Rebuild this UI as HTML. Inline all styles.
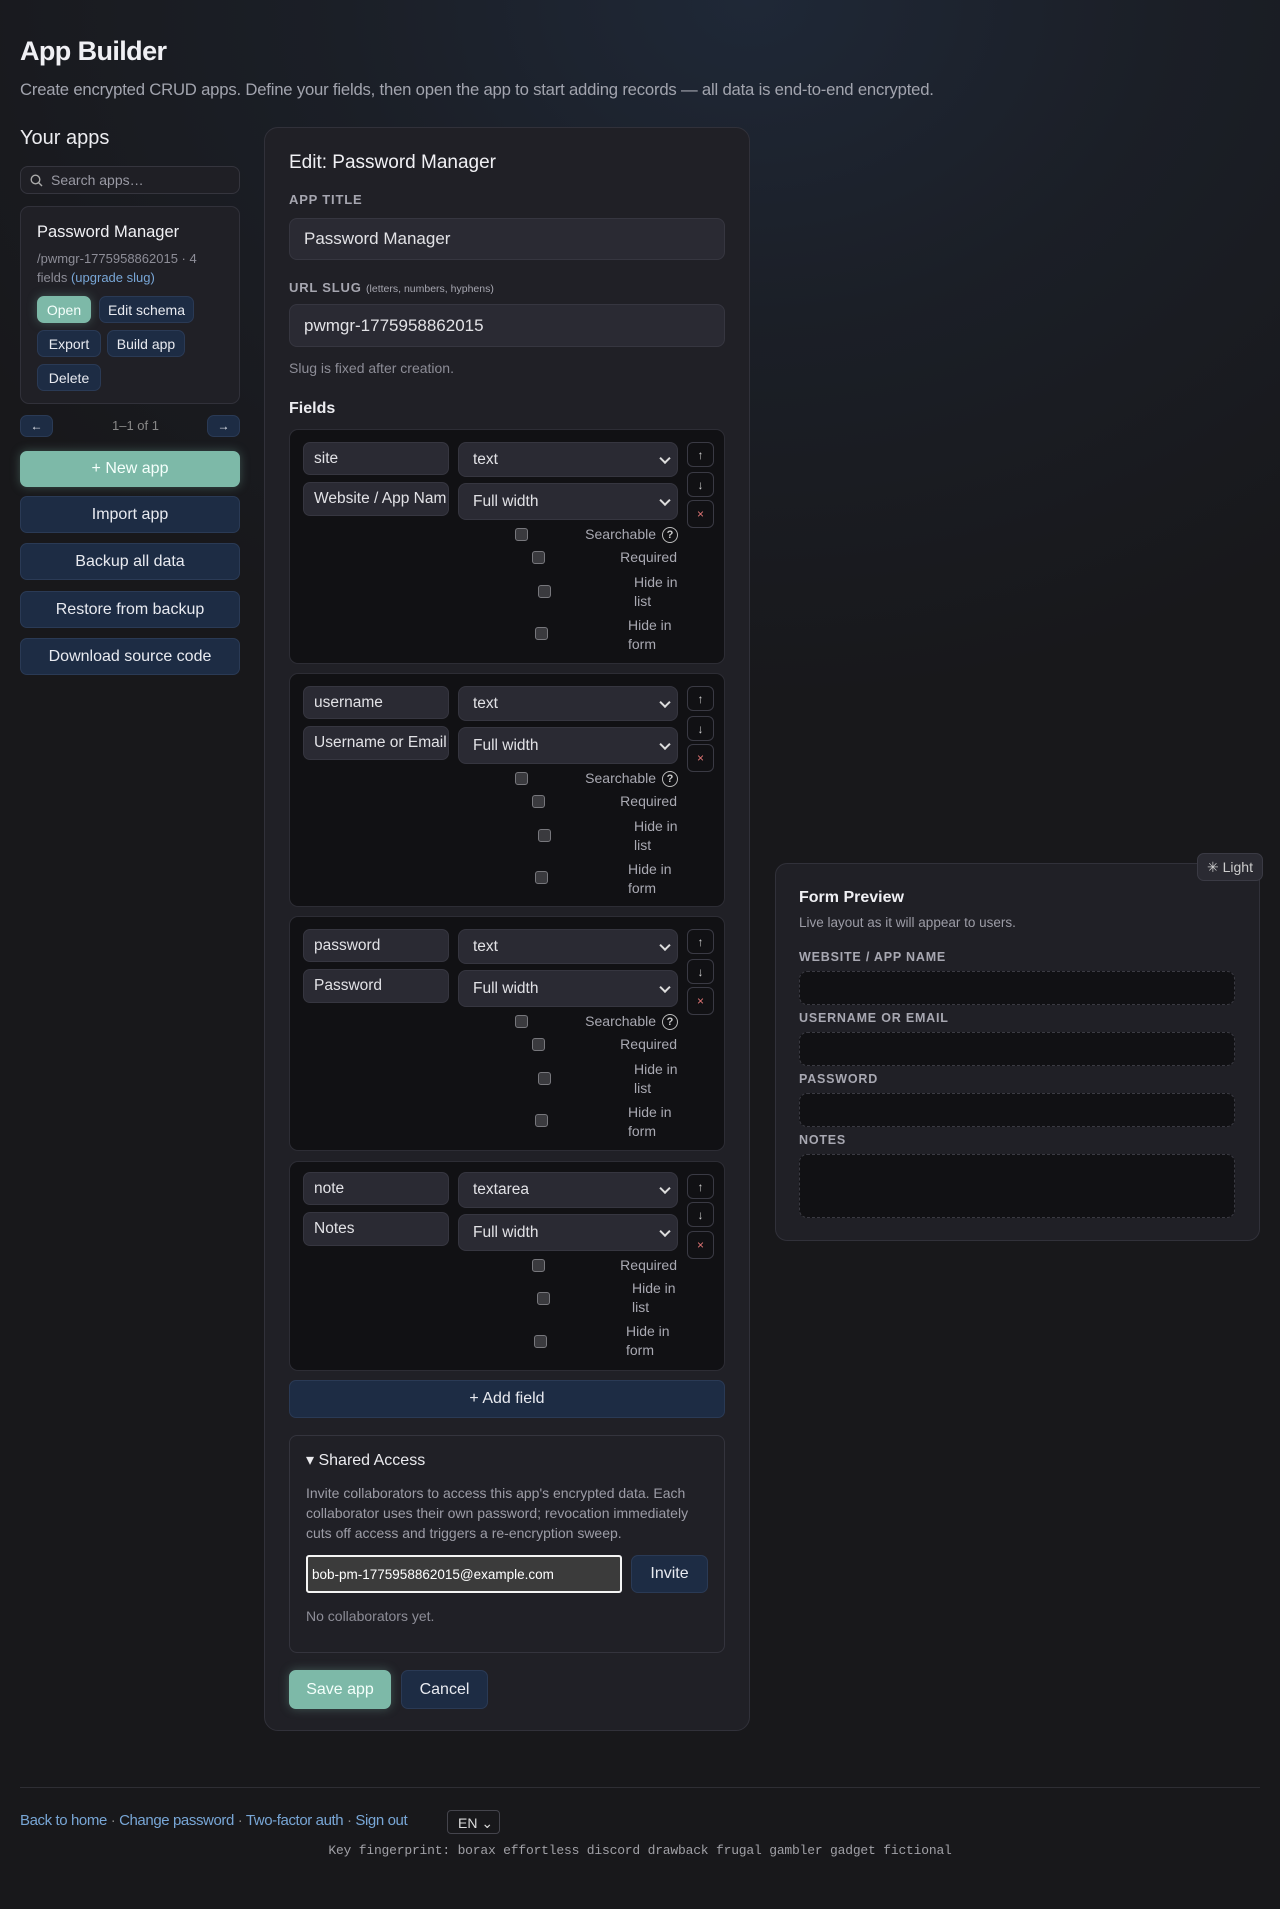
<!DOCTYPE html>
<html><head><meta charset="utf-8"><style>
*{box-sizing:border-box;margin:0;padding:0}
html,body{width:1280px;height:1909px;overflow:hidden}
body{background:#18181b;font-family:"Liberation Sans",sans-serif;color:#e6e6ea;position:relative}
.bg{position:absolute;left:0;top:0;width:1280px;height:1000px;background:radial-gradient(ellipse 900px 700px at 750px 0px,#1f2837 0%,#1b1f27 45%,rgba(24,24,27,0) 100%)}
.a{position:absolute}
.panel{background:#202026;border:1px solid #31313a;border-radius:12px}
.inp{background:#2a2a33;border:1px solid #363640;border-radius:8px;color:#e2e2e6;font-size:16px;display:flex;align-items:center;padding-left:14px}
.btn{background:#1d2c44;border:1px solid #2a3a55;border-radius:7px;color:#e8eaf0;display:flex;align-items:center;justify-content:center;font-size:15px}
.teal{background:#7db9a8;border-color:#7db9a8;color:#f4fffb;box-shadow:0 0 10px rgba(125,185,168,.35)}
.lbl{font-size:13px;letter-spacing:.8px;color:#a6a6b0;font-weight:bold}
.card{position:absolute;left:289px;width:436px;background:#111114;border:1px solid #2d2d35;border-radius:9px}
.card .fi{position:absolute;left:13px;width:146px;height:33px;font-size:15.5px;padding-left:10px;border-radius:7px}
.card .se{position:absolute;left:168px;width:220px;font-size:15.5px;padding-left:14px;border-radius:8px}
.card .se:after{content:"";position:absolute;right:8px;top:50%;width:6px;height:6px;border-right:2px solid #ddd;border-bottom:2px solid #ddd;transform:translateY(-70%) rotate(45deg)}
.sb{position:absolute;left:397px;width:27px;border:1px solid #3a3a44;border-radius:6px;display:flex;align-items:center;justify-content:center;color:#ccc;font-size:12px}
.cb{position:absolute;width:13px;height:13px;background:#3a3a3e;border:1px solid #77777c;border-radius:3px}
.ct{position:absolute;font-size:14px;color:#a9a9b2;line-height:19px}
.pi{position:absolute;left:799px;width:436px;background:#111114;border:1px dashed #3a3a42;border-radius:8px}
.pl{position:absolute;left:799px;font-size:12.5px;letter-spacing:.8px;color:#a8a8b2;font-weight:bold}
a,.lk{color:#78a6d6;text-decoration:none}
</style></head><body>
<div class="bg"></div>
<div class="a" style="left:20px;top:36px;font-size:27px;font-weight:bold;letter-spacing:-.6px;color:#f0f0f4">App Builder</div>
<div class="a" style="left:20px;top:80px;font-size:16.7px;color:#a2a4ae;letter-spacing:-.2px">Create encrypted CRUD apps. Define your fields, then open the app to start adding records — all data is end-to-end encrypted.</div>

<div class="a" style="left:20px;top:127px;font-size:20px;color:#ececf0">Your apps</div>
<div class="a inp" style="left:20px;top:166px;width:220px;height:28px;background:#1f1f25;font-size:14px;color:#9a9aa4;padding-left:30px;border-color:#35353e">Search apps…
<svg class="a" style="left:9px;top:7px" width="13" height="13" viewBox="0 0 13 13"><circle cx="5.5" cy="5.5" r="4.3" fill="none" stroke="#aaa" stroke-width="1.4"/><path d="M8.6 8.6L12 12" stroke="#aaa" stroke-width="1.4"/></svg></div>
<div class="a panel" style="left:20px;top:206px;width:220px;height:198px;border-radius:9px">
<div class="a" style="left:16px;top:16px;font-size:16.5px;color:#f0f0f4">Password Manager</div>
<div class="a" style="left:16px;top:42px;font-size:13px;color:#8d8d97;line-height:19px;width:190px">/pwmgr-1775958862015 · 4 fields <span class="lk">(upgrade slug)</span></div>
</div>
<div class="a btn teal" style="left:37px;top:296px;width:54px;height:27px;font-size:14px">Open</div>
<div class="a btn" style="left:99px;top:296px;width:95px;height:27px;font-size:14px">Edit schema</div>
<div class="a btn" style="left:37px;top:330px;width:64px;height:27px;font-size:14px">Export</div>
<div class="a btn" style="left:107px;top:330px;width:78px;height:27px;font-size:14px">Build app</div>
<div class="a btn" style="left:37px;top:364px;width:64px;height:27px;font-size:14px">Delete</div>
<div class="a btn" style="left:20px;top:415px;width:33px;height:22px;font-size:12px">←</div>
<div class="a" style="left:112px;top:418px;font-size:13px;color:#888">1–1 of 1</div>
<div class="a btn" style="left:207px;top:415px;width:33px;height:22px;font-size:12px">→</div>
<div class="a btn teal" style="left:20px;top:451px;width:220px;height:36px;font-size:16px">+ New app</div>
<div class="a btn" style="left:20px;top:496px;width:220px;height:37px;font-size:16px">Import app</div>
<div class="a btn" style="left:20px;top:543px;width:220px;height:37px;font-size:16px">Backup all data</div>
<div class="a btn" style="left:20px;top:591px;width:220px;height:37px;font-size:16px">Restore from backup</div>
<div class="a btn" style="left:20px;top:638px;width:220px;height:37px;font-size:16px">Download source code</div>

<div class="a panel" style="left:264px;top:127px;width:486px;height:1604px;border-radius:14px"></div>
<div class="a" style="left:289px;top:152px;font-size:19px;color:#f0f0f4">Edit: Password Manager</div>
<div class="a lbl" style="left:289px;top:192px">APP TITLE</div>
<div class="a inp" style="left:289px;top:218px;width:436px;height:42px;font-size:17px">Password Manager</div>
<div class="a lbl" style="left:289px;top:280px">URL SLUG <span style="font-size:10.5px;letter-spacing:0;font-weight:normal">(letters, numbers, hyphens)</span></div>
<div class="a inp" style="left:289px;top:304px;width:436px;height:43px;font-size:17px">pwmgr-1775958862015</div>
<div class="a" style="left:289px;top:360px;font-size:14px;color:#8d8d97">Slug is fixed after creation.</div>
<div class="a" style="left:289px;top:400px;font-size:16px;font-weight:bold;color:#ececf0">Fields</div>

<!-- card 1 -->
<div class="card" style="top:429px;height:235px">
<div class="fi inp" style="top:12px">site</div><div class="fi inp" style="top:52px;height:34px">Website / App Nam</div>
<div class="se inp" style="top:12px;height:35px">text</div><div class="se inp" style="top:53px;height:37px">Full width</div>
<div class="sb" style="top:12px;height:25px">↑</div><div class="sb" style="top:42px;height:25px">↓</div><div class="sb" style="top:70px;height:28px;color:#e07575">×</div>
<div class="cb" style="left:225px;top:98px"></div><div class="ct" style="right:68px;top:95px">Searchable</div>
<div class="a" style="left:372px;top:97px;width:16px;height:16px;border:1.3px solid #bbb;border-radius:50%;font-size:11px;color:#ccc;text-align:center;line-height:14px;font-weight:bold">?</div>
<div class="cb" style="left:242px;top:121px"></div><div class="ct" style="right:47px;top:118px">Required</div>
<div class="cb" style="left:248px;top:155px"></div><div class="ct" style="left:344px;top:143px">Hide in<br>list</div>
<div class="cb" style="left:245px;top:197px"></div><div class="ct" style="left:338px;top:186px">Hide in<br>form</div>
</div>
<!-- card 2 -->
<div class="card" style="top:673px;height:234px">
<div class="fi inp" style="top:12px">username</div><div class="fi inp" style="top:52px;height:34px">Username or Email</div>
<div class="se inp" style="top:12px;height:35px">text</div><div class="se inp" style="top:53px;height:37px">Full width</div>
<div class="sb" style="top:12px;height:25px">↑</div><div class="sb" style="top:42px;height:25px">↓</div><div class="sb" style="top:70px;height:28px;color:#e07575">×</div>
<div class="cb" style="left:225px;top:98px"></div><div class="ct" style="right:68px;top:95px">Searchable</div>
<div class="a" style="left:372px;top:97px;width:16px;height:16px;border:1.3px solid #bbb;border-radius:50%;font-size:11px;color:#ccc;text-align:center;line-height:14px;font-weight:bold">?</div>
<div class="cb" style="left:242px;top:121px"></div><div class="ct" style="right:47px;top:118px">Required</div>
<div class="cb" style="left:248px;top:155px"></div><div class="ct" style="left:344px;top:143px">Hide in<br>list</div>
<div class="cb" style="left:245px;top:197px"></div><div class="ct" style="left:338px;top:186px">Hide in<br>form</div>
</div>
<!-- card 3 -->
<div class="card" style="top:916px;height:235px">
<div class="fi inp" style="top:12px">password</div><div class="fi inp" style="top:52px;height:34px">Password</div>
<div class="se inp" style="top:12px;height:35px">text</div><div class="se inp" style="top:53px;height:37px">Full width</div>
<div class="sb" style="top:12px;height:25px">↑</div><div class="sb" style="top:42px;height:25px">↓</div><div class="sb" style="top:70px;height:28px;color:#e07575">×</div>
<div class="cb" style="left:225px;top:98px"></div><div class="ct" style="right:68px;top:95px">Searchable</div>
<div class="a" style="left:372px;top:97px;width:16px;height:16px;border:1.3px solid #bbb;border-radius:50%;font-size:11px;color:#ccc;text-align:center;line-height:14px;font-weight:bold">?</div>
<div class="cb" style="left:242px;top:121px"></div><div class="ct" style="right:47px;top:118px">Required</div>
<div class="cb" style="left:248px;top:155px"></div><div class="ct" style="left:344px;top:143px">Hide in<br>list</div>
<div class="cb" style="left:245px;top:197px"></div><div class="ct" style="left:338px;top:186px">Hide in<br>form</div>
</div>
<!-- card 4 -->
<div class="card" style="top:1161px;height:210px">
<div class="fi inp" style="top:10px">note</div><div class="fi inp" style="top:50px;height:34px">Notes</div>
<div class="se inp" style="top:10px;height:36px">textarea</div><div class="se inp" style="top:52px;height:37px">Full width</div>
<div class="sb" style="top:12px;height:25px">↑</div><div class="sb" style="top:40px;height:25px">↓</div><div class="sb" style="top:69px;height:28px;color:#e07575">×</div>
<div class="cb" style="left:242px;top:97px"></div><div class="ct" style="right:47px;top:94px">Required</div>
<div class="cb" style="left:247px;top:130px"></div><div class="ct" style="left:342px;top:117px">Hide in<br>list</div>
<div class="cb" style="left:244px;top:173px"></div><div class="ct" style="left:336px;top:160px">Hide in<br>form</div>
</div>

<div class="a btn" style="left:289px;top:1380px;width:436px;height:38px;font-size:16px">+ Add field</div>
<div class="a" style="left:289px;top:1435px;width:436px;height:218px;border:1px solid #34343d;border-radius:8px"></div>
<div class="a" style="left:306px;top:1450px;font-size:16px;color:#eaeaee">▾ Shared Access</div>
<div class="a" style="left:306px;top:1483px;width:400px;font-size:14px;color:#9c9ca6;line-height:20px">Invite collaborators to access this app's encrypted data. Each collaborator uses their own password; revocation immediately cuts off access and triggers a re-encryption sweep.</div>
<div class="a" style="left:306px;top:1555px;width:316px;height:38px;background:#3b3b3b;border:2px solid #f4f4f4;border-radius:3px;font-size:13.5px;color:#fff;padding:10px 0 0 4px">bob-pm-1775958862015@example.com</div>
<div class="a btn" style="left:631px;top:1555px;width:77px;height:38px;font-size:16px">Invite</div>
<div class="a" style="left:306px;top:1608px;font-size:14px;color:#8d8d97">No collaborators yet.</div>
<div class="a btn teal" style="left:289px;top:1670px;width:102px;height:39px;font-size:16px">Save app</div>
<div class="a btn" style="left:401px;top:1670px;width:87px;height:39px;font-size:16px">Cancel</div>

<div class="a panel" style="left:775px;top:863px;width:485px;height:378px"></div>
<div class="a btn" style="left:1197px;top:853px;width:66px;height:28px;background:#2a2a32;border-color:#3a3a44;font-size:14px;color:#ccc">✳ Light</div>
<div class="a" style="left:799px;top:889px;font-size:16px;font-weight:bold;color:#f0f0f4">Form Preview</div>
<div class="a" style="left:799px;top:915px;font-size:13.5px;color:#9c9ca6">Live layout as it will appear to users.</div>
<div class="pl" style="top:950px">WEBSITE / APP NAME</div>
<div class="pi" style="top:971px;height:34px"></div>
<div class="pl" style="top:1011px">USERNAME OR EMAIL</div>
<div class="pi" style="top:1032px;height:34px"></div>
<div class="pl" style="top:1072px">PASSWORD</div>
<div class="pi" style="top:1093px;height:34px"></div>
<div class="pl" style="top:1133px">NOTES</div>
<div class="pi" style="top:1154px;height:64px"></div>

<div class="a" style="left:20px;top:1787px;width:1240px;height:1px;background:#2e2e34"></div>
<div class="a" style="left:20px;top:1812px;font-size:15px;color:#888;letter-spacing:-.4px"><a>Back to home</a> · <a>Change password</a> · <a>Two-factor auth</a> · <a>Sign out</a></div>
<div class="a" style="left:447px;top:1810px;width:53px;height:24px;border:1px solid #44444c;border-radius:4px;font-size:14px;color:#ddd;padding:4px 0 0 10px">EN ⌄</div>
<div class="a" style="left:0;width:1280px;top:1843px;text-align:center;font-family:'Liberation Mono',monospace;font-size:13px;letter-spacing:-.2px;color:#a0a0a6">Key fingerprint: borax effortless discord drawback frugal gambler gadget fictional</div>
</body></html>
